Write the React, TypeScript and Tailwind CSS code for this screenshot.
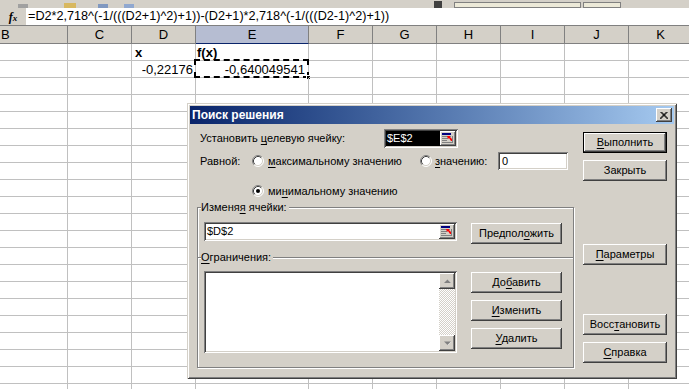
import React from 'react';

// mnemonic text: underline one letter, like a Windows dialog
function M({ t, i }: { t: string; i?: number }) {
  if (i === undefined || i < 0) return <>{t}</>;
  return (
    <>
      {t.slice(0, i)}
      <span className="underline underline-offset-[2px]">{t[i]}</span>
      {t.slice(i + 1)}
    </>
  );
}

const raised =
  'shadow-[inset_-1px_-1px_#404040,inset_1px_1px_#ffffff,inset_-2px_-2px_#808080]';
const sunken =
  'shadow-[inset_1px_1px_#808080,inset_-1px_-1px_#ffffff,inset_2px_2px_#404040,inset_-2px_-2px_#d4d0c8]';

function Btn({ t, i, def, className = '' }: { t: string; i?: number; def?: boolean; className?: string }) {
  return (
    <div
      className={`h-[21px] flex items-center justify-center bg-[#d4d0c8] ${raised} ${
        def ? 'border border-black' : ''
      } ${className}`}
    >
      <span className="leading-none">
        <M t={t} i={i} />
      </span>
    </div>
  );
}

function Radio({ checked }: { checked?: boolean }) {
  return (
    <svg width="12" height="12" viewBox="0 0 12 12" className="shrink-0">
      <circle cx="6" cy="6" r="5" fill="#ffffff" />
      <path d="M2.11 9.89 A5.5 5.5 0 0 1 9.89 2.11" fill="none" stroke="#808080" />
      <path d="M9.89 2.11 A5.5 5.5 0 0 1 2.11 9.89" fill="none" stroke="#ffffff" />
      <path d="M2.82 9.18 A4.5 4.5 0 0 1 9.18 2.82" fill="none" stroke="#404040" />
      <path d="M9.18 2.82 A4.5 4.5 0 0 1 2.82 9.18" fill="none" stroke="#d4d0c8" />
      {checked && <circle cx="6" cy="6" r="2" fill="#000000" />}
    </svg>
  );
}

function RefButton() {
  return (
    <div className={`w-[16px] h-[15px] shrink-0 bg-[#d4d0c8] flex items-center justify-center ${raised}`}>
      <svg width="12" height="11" viewBox="0 0 12 11">
        <rect x="0" y="0" width="9" height="2" fill="#000080" />
        <rect x="0" y="3" width="9" height="1" fill="#808080" />
        <rect x="0" y="5" width="6" height="1" fill="#808080" />
        <rect x="0" y="7" width="5" height="1" fill="#808080" />
        <rect x="0" y="9" width="11" height="1" fill="#808080" />
        <rect x="10" y="3" width="1" height="7" fill="#808080" />
        <path d="M5 3 L8 3 L8 4 L10 6 L10 8 L9 8 L7 5 L6 6 Z" fill="#ff0000" />
      </svg>
    </div>
  );
}

function ArrowBtn({ up }: { up?: boolean }) {
  return (
    <div className={`w-[16px] h-[16px] bg-[#d4d0c8] flex items-center justify-center ${raised}`}>
      <svg width="7" height="5" viewBox="0 0 7 5">
        {up ? (
          <>
            <path d="M1 4 L4 1 L7 4 Z" fill="#ffffff" />
            <path d="M0 4 L3.5 0.5 L7 4 Z" fill="#808080" />
          </>
        ) : (
          <>
            <path d="M1 1 L4 4 L7 1 Z" fill="#ffffff" />
            <path d="M0 0.5 L3.5 4 L7 0.5 Z" fill="#808080" />
          </>
        )}
      </svg>
    </div>
  );
}

function Group({ label, i, h, children }: { label: string; i: number; h: string; children: React.ReactNode }) {
  return (
    <div
      className={`relative ${h} border border-[#808080] shadow-[inset_1px_1px_#ffffff,1px_1px_#ffffff]`}
    >
      <span className="absolute -top-[7px] left-[3px] bg-[#d4d0c8] pr-[2px] leading-[13px]">
        <M t={label} i={i} />
      </span>
      {children}
    </div>
  );
}

function SolverDialog() {
  return (
    <div className="absolute left-[187px] top-[103px] w-[490px] h-[276px] bg-[#d4d0c8] p-[3px] shadow-[inset_1px_1px_#d4d0c8,inset_-1px_-1px_#404040,inset_2px_2px_#ffffff,inset_-2px_-2px_#808080] text-[11px] leading-[13px] text-black">
      <div className="h-[18px] flex items-center justify-between bg-linear-to-r from-[#0a246a] to-[#a6caf0] pl-[2px] pr-[2px]">
        <span className="text-white font-bold text-[12px]">Поиск решения</span>
        <div className={`w-[16px] h-[14px] bg-[#d4d0c8] flex items-center justify-center ${raised}`}>
          <svg width="8" height="7" viewBox="0 0 8 7">
            <path d="M0.5 0 L7.5 7 M1.5 0 L8.5 7 M7.5 0 L0.5 7 M6.5 0 L-0.5 7" stroke="#000000" strokeWidth="1" />
          </svg>
        </div>
      </div>

      <div className="flex pl-[7px]">
        <div className="w-[377px] flex flex-col">
          <div className="mt-[5px] h-[19px] flex items-center">
            <span className="w-[187px] pl-[3px]">
              <M t="Установить целевую ячейку:" i={11} />
            </span>
            <div className={`w-[74px] h-[19px] flex items-center p-[2px] bg-white ${sunken}`}>
              <div className="flex-1 h-full bg-black text-white pl-[1px] flex items-center">$E$2</div>
              <RefButton />
            </div>
          </div>

          <div className="mt-[4px] h-[18px] flex items-center">
            <span className="w-[55px] pl-[3px]">Равной:</span>
            <Radio />
            <span className="ml-[4px] w-[152px]">
              <M t="максимальному значению" i={0} />
            </span>
            <Radio />
            <span className="ml-[3px] w-[63px]">
              <M t="значению:" i={0} />
            </span>
            <div className={`w-[70px] h-[18px] bg-white pl-[4px] flex items-center ${sunken}`}>0</div>
          </div>

          <div className="mt-[15px] h-[12px] flex items-center pl-[55px]">
            <Radio checked />
            <span className="ml-[4px]">
              <M t="минимальному значению" i={2} />
            </span>
          </div>

          <div className="mt-[10px]">
            <Group label="Изменяя ячейки:" i={6} h="h-[51px]">
              <div className="flex items-start pt-[14px] pl-[6px]">
                <div className={`w-[253px] h-[19px] flex items-center p-[2px] bg-white ${sunken}`}>
                  <div className="flex-1 pl-[1px]">$D$2</div>
                  <RefButton />
                </div>
                <Btn t="Предположить" i={7} className="ml-[14px] mt-[1px] w-[91px]" />
              </div>
            </Group>
            <Group label="Ограничения:" i={0} h="h-[111px] -mt-px">
              <div className="flex items-start pt-[13px] pl-[6px]">
                <div className={`w-[253px] h-[82px] flex bg-white p-[2px] ${sunken}`}>
                  <div className="flex-1" />
                  <div className="w-[16px] flex flex-col bg-[repeating-conic-gradient(#d4d0c8_0_25%,#ffffff_0_50%)] bg-[length:2px_2px]">
                    <ArrowBtn up />
                    <div className="flex-1" />
                    <ArrowBtn />
                  </div>
                </div>
                <div className="ml-[14px] mt-[1px] w-[91px] flex flex-col gap-[7px]">
                  <Btn t="Добавить" i={2} />
                  <Btn t="Изменить" i={0} />
                  <Btn t="Удалить" i={0} />
                </div>
              </div>
            </Group>
          </div>
        </div>

        <div className="ml-[9px] w-[84px] flex flex-col">
          <Btn t="Выполнить" i={0} def className="mt-[8px]" />
          <Btn t="Закрыть" className="mt-[7px]" />
          <Btn t="Параметры" i={0} className="mt-[63px]" />
          <Btn t="Восстановить" i={4} className="mt-[49px]" />
          <Btn t="Справка" i={0} className="mt-[7px]" />
        </div>
      </div>
    </div>
  );
}

const cols = [
  { id: 'B', w: 'w-[68px]' },
  { id: 'C', w: 'w-[64px]' },
  { id: 'D', w: 'w-[64px]' },
  { id: 'E', w: 'w-[113px]' },
  { id: 'F', w: 'w-[64px]' },
  { id: 'G', w: 'w-[64px]' },
  { id: 'H', w: 'w-[64px]' },
  { id: 'I', w: 'w-[64px]' },
  { id: 'J', w: 'w-[64px]' },
  { id: 'K', w: 'w-[64px]' },
];

function cellContent(row: number, col: string) {
  if (row === 0 && col === 'D') return <span className="font-bold pl-[3px]">x</span>;
  if (row === 0 && col === 'E') return <span className="font-bold pl-[1px]">f(x)</span>;
  if (row === 1 && col === 'D') return <span className="ml-auto pr-[2px]">-0,22176</span>;
  if (row === 1 && col === 'E')
    return (
      <>
        <span className="ml-auto pr-[3px]">-0,640049541</span>
        <div className="absolute -left-[2px] -top-[2px] -right-[1px] -bottom-[1px] border-2 border-dashed border-black" />
        <div className="absolute -right-[3px] -bottom-[3px] w-[5px] h-[5px] bg-black border border-white" />
      </>
    );
  return null;
}

function Sheet() {
  const rows = Array.from({ length: 21 }, (_, r) => r);
  return (
    <div className="flex flex-col text-[13px] leading-[15px]">
      <div className="flex h-[18px]">
        {cols.map((c) => (
          <div
            key={c.id}
            className={`${c.w} shrink-0 flex items-center border-r border-b border-[#808080] ${
              c.id === 'E' ? 'bg-[#b6bdd2] border-b-[#0a246a]' : 'bg-[#d4d0c8]'
            } ${c.id === 'B' ? 'justify-start pl-[1px]' : 'justify-center'}`}
          >
            {c.id}
          </div>
        ))}
      </div>
      {rows.map((r) => (
        <div key={r} className="flex h-[17px]">
          {cols.map((c) => (
            <div
              key={c.id}
              className={`${c.w} shrink-0 relative flex items-center border-r border-b border-[#c0c0c0]`}
            >
              {cellContent(r, c.id)}
            </div>
          ))}
        </div>
      ))}
    </div>
  );
}

export default function App() {
  return (
    <div className="relative w-[689px] h-[389px] overflow-hidden bg-white font-['Liberation_Sans',Arial,sans-serif] text-black">
      <div className="h-[8px] bg-[#d4d0c8] flex items-end">
        <div className="ml-[18px] w-[10px] h-[4px] bg-[#a0a0a0]" />
        <div className="ml-[36px] w-[12px] h-[5px] bg-[#d8b860]" />
        <div className="ml-[22px] w-[10px] h-[4px] bg-[#8098c0]" />
        <div className="ml-[16px] w-[10px] h-[4px] bg-[#90a8d0]" />
        <div className="ml-[300px] w-[8px] h-[7px] bg-[#404040]" />
        <div className="ml-[12px] w-[127px] h-[6px] border border-[#808080] bg-[#ece9d8]" />
        <div className="ml-[2px] w-[38px] h-[6px] border border-[#808080] bg-[#ece9d8]" />
      </div>
      <div className="h-[18px] flex items-center border-b border-[#808080]">
        <div className="w-[26px] h-full bg-[#d4d0c8] flex items-center justify-center">
          <span className="font-['Liberation_Serif',serif] italic font-bold text-[12px] leading-none">
            f<span className="text-[9px]">x</span>
          </span>
        </div>
        <span className="ml-[2px] text-[12.65px] leading-none whitespace-nowrap">
          =D2*2,718^(-1/(((D2+1)^2)+1))-(D2+1)*2,718^(-1/(((D2-1)^2)+1))
        </span>
      </div>
      <Sheet />
      <SolverDialog />
    </div>
  );
}
